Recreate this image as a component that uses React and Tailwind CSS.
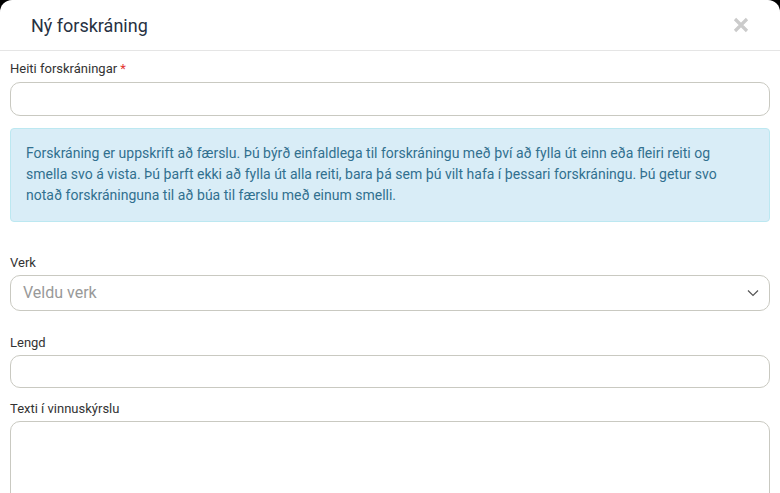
import React from "react";

const Label = ({ children, required }) => (
  <label className="block text-[13px] leading-[16px] text-[#333]">
    {children}
    {required && <span className="text-[#e3342f]"> *</span>}
  </label>
);

const App = () => {
  return (
    <div className="h-[493px] w-[780px] overflow-hidden bg-black font-['Roboto',sans-serif]">
      <div className="h-full rounded-t-[12px] bg-white">
        <div className="flex h-[51px] items-center justify-between border-b border-[#e5e5e5] pl-[31px] pr-[30px]">
          <h1 className="text-[18px] font-normal text-[#273142]">Ný forskráning</h1>
          <svg width="16" height="16" viewBox="0 0 16 16" className="mr-[1px]">
            <path d="M2 2 L14 14 M14 2 L2 14" stroke="#cbcbcb" strokeWidth="3.2" />
          </svg>
        </div>

        <div className="px-[10px] pt-[10px]">
          <Label required>Heiti forskráningar</Label>
          <input className="mt-[5px] block h-[34px] w-full rounded-[10px] border border-[#c9c9c1] bg-white px-3 outline-none" />

          <div className="mt-[12px] rounded-[4px] border border-[#bce8f1] bg-[#d9edf7] px-[15px] pt-[14px] pb-[15px] text-[14px] leading-[21px] text-[#31708f]">
            Forskráning er uppskrift að færslu. Þú býrð einfaldlega til forskráningu með því að fylla út einn eða fleiri reiti og smella svo á vista. Þú þarft ekki að fylla út alla reiti, bara þá sem þú vilt hafa í þessari forskráningu. Þú getur svo notað forskráninguna til að búa til færslu með einum smelli.
          </div>

          <div className="mt-[33px]">
            <Label>Verk</Label>
            <div className="mt-[4px] flex h-[36px] items-center justify-between rounded-[10px] border border-[#c9c9c1] pl-[12px] pr-[10px]">
              <span className="text-[16px] text-[#999]">Veldu verk</span>
              <svg width="12" height="8" viewBox="0 0 12 8">
                <path d="M1 1.5 L6 6.5 L11 1.5" fill="none" stroke="#555" strokeWidth="1.2" />
              </svg>
            </div>
          </div>

          <div className="mt-[24px]">
            <Label>Lengd</Label>
            <input className="mt-[4px] block h-[33px] w-full rounded-[10px] border border-[#c9c9c1] bg-white px-3 outline-none" />
          </div>

          <div className="mt-[13px]">
            <Label>Texti í vinnuskýrslu</Label>
            <textarea className="mt-[4px] block h-[120px] w-full resize-none rounded-[10px] border border-[#c9c9c1] bg-white px-3 outline-none" />
          </div>
        </div>
      </div>
    </div>
  );
};

export default App;
